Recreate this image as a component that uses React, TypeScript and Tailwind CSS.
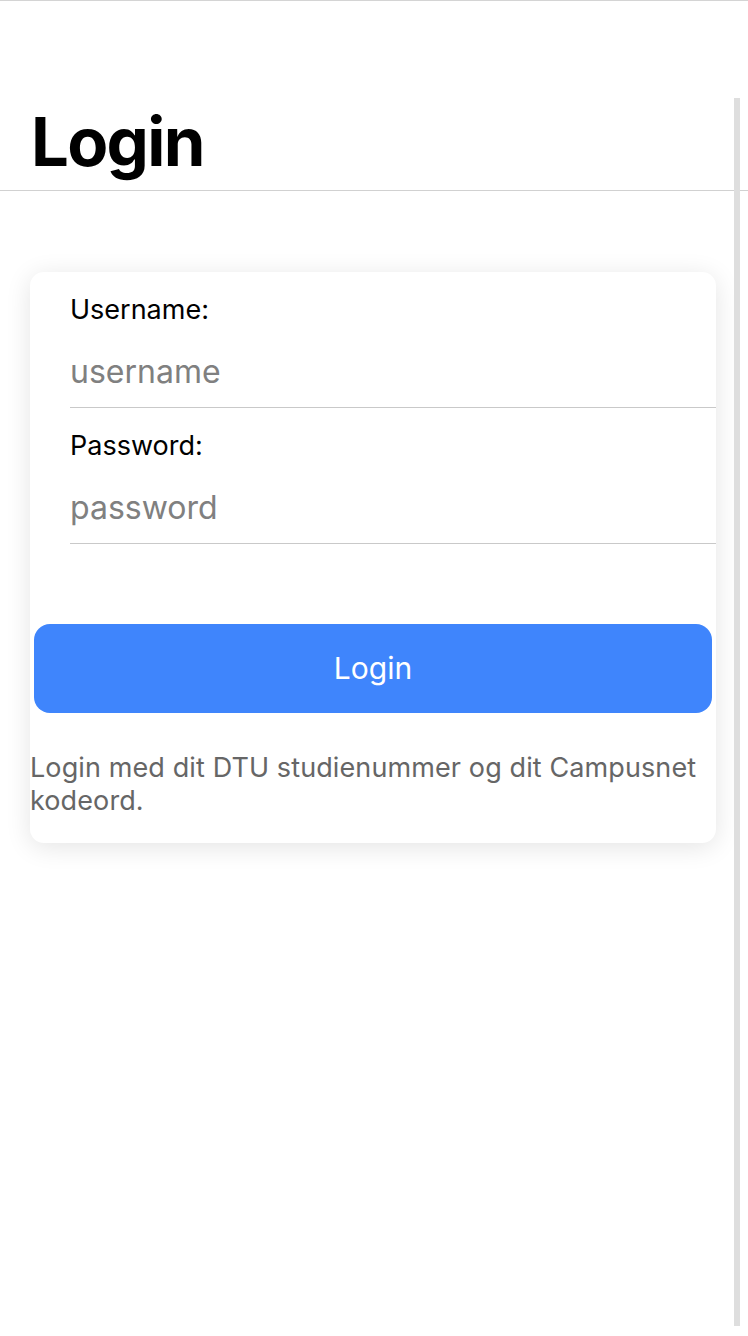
import { useState } from 'react';

export default function App() {
  const [username, setUsername] = useState('');
  const [password, setPassword] = useState('');

  return (
    <div className="relative min-h-[1336px] bg-white border-t border-[#d4d4d4] font-['Inter','Liberation_Sans',sans-serif]">
      {/* scroll indicator */}
      <div className="absolute left-[734px] top-[97px] w-[6px] h-[1228px] bg-[#dedede]" />

      <div className="pt-[107px] pb-[15px] pl-[31px] border-b border-[#d1d1d1]">
        <h1 className="text-[67px] leading-none font-bold tracking-tight text-black">Login</h1>
      </div>

      <div className="pt-[81px] pl-[30px]">
        <div className="w-[686px] bg-white rounded-[14px] shadow-[0_4px_26px_rgba(0,0,0,0.11)] pb-[26px]">
          <div className="pl-[40px]">
            <div className="pt-[21px]">
              <label className="block text-[27px] leading-[34px] text-black">Username:</label>
              <input
                value={username}
                onChange={(e) => setUsername(e.target.value)}
                placeholder="username"
                className="block w-full h-[81px] pt-[8px] text-[32px] text-black placeholder:text-[#808080] border-b border-[#c9c9c9] outline-none bg-transparent"
              />
            </div>
            <div className="pt-[21px]">
              <label className="block text-[27px] leading-[34px] text-black">Password:</label>
              <input
                type="password"
                value={password}
                onChange={(e) => setPassword(e.target.value)}
                placeholder="password"
                className="block w-full h-[81px] pt-[8px] text-[32px] text-black placeholder:text-[#808080] border-b border-[#c9c9c9] outline-none bg-transparent"
              />
            </div>
          </div>

          <div className="px-[4px] pt-[80px]">
            <button className="w-full h-[89px] rounded-[16px] bg-[#3f85fc] text-white text-[30px]">
              Login
            </button>
          </div>

          <p className="mt-[38px] text-[27px] leading-[33px] tracking-[0.004em] text-[#666666]">
            Login med dit DTU studienummer og dit Campusnet kodeord.
          </p>
        </div>
      </div>
    </div>
  );
}
